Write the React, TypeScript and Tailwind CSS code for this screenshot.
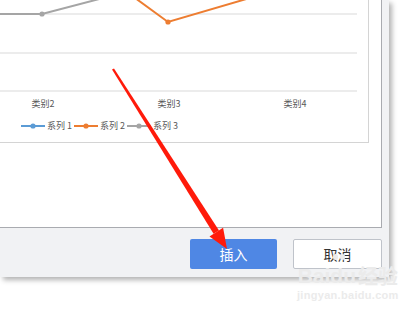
import React from "react";

const cats = ["类别2", "类别3", "类别4"];
const legend = [
  { name: "系列 1", color: "#5b9bd5" },
  { name: "系列 2", color: "#ed7d31" },
  { name: "系列 3", color: "#a5a5a5" },
];

export default function App() {
  return (
    <div
      className="relative w-[415px] h-[319px] overflow-hidden bg-white"
      style={{ fontFamily: '"Noto Sans CJK SC", "Noto Sans", sans-serif' }}
    >
      {/* dialog */}
      <div className="flex flex-col w-[389px] h-[277px] bg-[#f1f2f4] pr-[7px] shadow-[3px_3px_5px_rgba(0,0,0,0.3)]">
        <div className="flex flex-col w-[382px] h-[228px] bg-white border-r border-b border-[#a9abb0]">
          {/* chart box */}
          <div className="flex flex-col w-[369px] h-[143px] border-r border-b border-[#d4d4d4]">
            <svg width="357" height="92" viewBox="0 0 357 92" className="block">
              <line x1="0" y1="14" x2="357" y2="14" stroke="#d9d9d9" strokeWidth="1" />
              <line x1="0" y1="53" x2="357" y2="53" stroke="#d9d9d9" strokeWidth="1" />
              <line x1="0" y1="91" x2="357" y2="91" stroke="#d9d9d9" strokeWidth="1" />
              <polyline points="-84,14 42,14 168,-19" fill="none" stroke="#a5a5a5" strokeWidth="2" />
              <circle cx="42" cy="14" r="2.6" fill="#a5a5a5" />
              <polyline points="42,-70 168,22 294,-15" fill="none" stroke="#ed7d31" strokeWidth="2" />
              <circle cx="168" cy="22" r="2.6" fill="#ed7d31" />
            </svg>
            <div className="flex ml-[-20px] mt-[6px] text-[9px] leading-[12px] text-[#595959]">
              {cats.map((c) => (
                <div key={c} className="w-[126px] text-center">
                  {c}
                </div>
              ))}
            </div>
            <div className="flex items-center ml-[21px] mt-[10px] text-[9px] leading-[12px] text-[#595959]">
              {legend.map((l) => (
                <div key={l.name} className="flex items-center">
                  <svg width="24" height="6" viewBox="0 0 24 6" className="block">
                    <line x1="0" y1="3" x2="24" y2="3" stroke={l.color} strokeWidth="2" />
                    <circle cx="12" cy="3" r="2.6" fill={l.color} />
                  </svg>
                  <span className="ml-[2px] mr-[2px]">{l.name}</span>
                </div>
              ))}
            </div>
          </div>
        </div>
        {/* footer */}
        <div className="flex justify-end gap-[16px] pt-[11px]">
          <button className="w-[87px] h-[30px] rounded-[2px] bg-[#4f87e4] text-white text-[14px]">
            插入
          </button>
          <button className="w-[89px] h-[30px] rounded-[2px] bg-white border border-[#bfc3ca] text-[#333] text-[14px]">
            取消
          </button>
        </div>
      </div>

      {/* watermark */}
      <div className="absolute left-[297px] top-[264px] flex flex-col items-center text-[#ebebeb] select-none">
        <div className="flex items-end font-bold text-[21px] leading-[24px]" style={{ fontFamily: '"Liberation Sans", sans-serif' }}>
          <span>Bai</span>
          <span className="relative">
            <span className="absolute left-[3px] top-[-10px] flex gap-[2px]">
              <span className="w-[5px] h-[6px] rounded-full bg-[#ebebeb]" />
              <span className="w-[5px] h-[6px] rounded-full bg-[#ebebeb]" />
            </span>
            du
          </span>
          <span className="ml-[2px] text-[20px]" style={{ fontFamily: '"Noto Sans CJK SC", sans-serif' }}>经验</span>
        </div>
        <div className="text-[11px] leading-[14px] font-bold tracking-[0.3px]" style={{ fontFamily: '"Liberation Sans", sans-serif' }}>
          jingyan.baidu.com
        </div>
      </div>

      {/* red annotation arrow */}
      <svg className="absolute left-0 top-0" width="415" height="319" viewBox="0 0 415 319">
        <polygon points="112,69.5 114,68.5 219,230.4 213.6,233.8" fill="#ff1a0a" />
        <polygon points="227,249 209.5,236.4 223.1,227.8" fill="#ff1a0a" />
      </svg>
    </div>
  );
}
